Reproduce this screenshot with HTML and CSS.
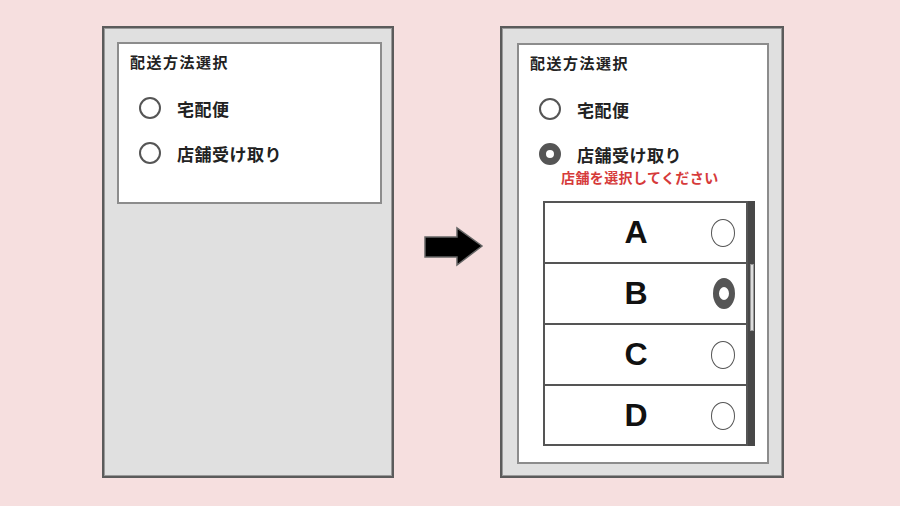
FILE: index.html
```html
<!DOCTYPE html>
<html lang="ja">
<head>
  <meta charset="UTF-8">
  <title>配送方法選択</title>
  <link rel="stylesheet" href="styles.css">
</head>
<body>
  <div class="stage">

    <!-- BEFORE -->
    <div class="phone phone-left">
      <div class="card card-short">
        <div class="card-title">配送方法選択</div>
        <div class="options">
          <div class="option"><span class="radio"></span><span class="label">宅配便</span></div>
          <div class="option"><span class="radio"></span><span class="label">店舗受け取り</span></div>
        </div>
      </div>
    </div>

    <!-- ARROW -->
    <svg class="arrow" width="60" height="42" viewBox="0 0 60 42">
      <polygon points="1,11 33,11 33,2 58,20 33,39 33,31 1,31" fill="#000" stroke="#666" stroke-width="1.5" stroke-linejoin="miter"/>
    </svg>

    <!-- AFTER -->
    <div class="phone phone-right">
      <div class="card card-full">
        <div class="card-title">配送方法選択</div>
        <div class="options">
          <div class="option"><span class="radio"></span><span class="label">宅配便</span></div>
          <div class="option"><span class="radio checked"></span><span class="label">店舗受け取り</span></div>
        </div>
        <div class="note">店舗を選択してください</div>

        <div class="store-list">
          <div class="rows">
            <div class="row"><span class="letter">A</span><span class="pick"></span></div>
            <div class="row"><span class="letter">B</span><span class="pick picked"></span></div>
            <div class="row"><span class="letter">C</span><span class="pick"></span></div>
            <div class="row"><span class="letter">D</span><span class="pick"></span></div>
          </div>
          <div class="scrollbar"><div class="thumb"></div></div>
        </div>
      </div>
    </div>

  </div>
</body>
</html>
```

FILE: styles.css
```css
/* page */
body {
  margin: 0;
  background: #f6dfdf;
  font-family: "Noto Sans CJK JP", "Noto Sans", sans-serif;
  color: #222;
}

.stage {
  display: flex;
  align-items: flex-start;
  padding: 26px 0 0 102px;
}

/* phone frames */
.phone {
  box-sizing: border-box;
  height: 452px;
  border: 2px solid #5b5b5b;
  box-shadow: inset 0 0 0 1px #9a9a9a;
  background: #e0e0e0;
  display: flex;
  flex-direction: column;
}

.phone-left {
  width: 292px;
  padding: 14px 10px 0 13px;
}

.phone-right {
  width: 284px;
  margin-left: 16px;
  padding: 15px 13px 12px 15px;
}

.arrow {
  display: block;
  margin: 200px 0 0 30px;
}

/* white card */
.card {
  background: #fff;
  border: 2px solid #8c8c8c;
}

.card-short {
  height: 158px;
}

.card-full {
  flex: 1;
}

.card-title {
  padding: 8px 0 0 11px;
  font-size: 15px;
  line-height: 20px;
  font-weight: 700;
  letter-spacing: 1.5px;
}

/* radio options */
.options {
  display: flex;
  flex-direction: column;
  gap: 13px;
  margin-top: 20px;
  padding-left: 20px;
}

.option {
  display: flex;
  align-items: center;
  height: 32px;
}

.radio {
  box-sizing: border-box;
  width: 22px;
  height: 22px;
  border: 2px solid #555;
  border-radius: 50%;
}

.radio.checked {
  border-width: 7px;
}

.label {
  margin-left: 16px;
  font-size: 17px;
  font-weight: 700;
  letter-spacing: 0.5px;
}

.note {
  margin: -2px 0 0 42px;
  font-size: 14px;
  line-height: 18px;
  font-weight: 700;
  letter-spacing: 0.4px;
  color: #d63a3a;
}

/* store list */
.store-list {
  display: flex;
  height: 245px;
  margin: 15px 12px 0 24px;
}

.rows {
  flex: 1;
  border: 2px solid #555;
  overflow: hidden;
}

.row {
  display: flex;
  align-items: center;
  height: 59px;
  padding-right: 10px;
  border-bottom: 2px solid #555;
}

.letter {
  flex: 1;
  padding-left: 16px;
  text-align: center;
  font-family: "Liberation Sans", Arial, sans-serif;
  font-size: 32px;
  font-weight: 700;
  color: #111;
}

.pick {
  box-sizing: border-box;
  width: 24px;
  height: 28px;
  margin-right: 1px;
  border: 1.5px solid #555;
  border-radius: 50%;
}

.pick.picked {
  width: 22px;
  height: 31px;
  margin: 0 1px 0 2px;
  border-width: 9px 6px;
}

.scrollbar {
  width: 7px;
  background: #484848;
}

.thumb {
  box-sizing: border-box;
  width: 4px;
  height: 67px;
  margin: 63px 0 0 2px;
  background: #ddd;
  border: 1px solid #999;
}
```
